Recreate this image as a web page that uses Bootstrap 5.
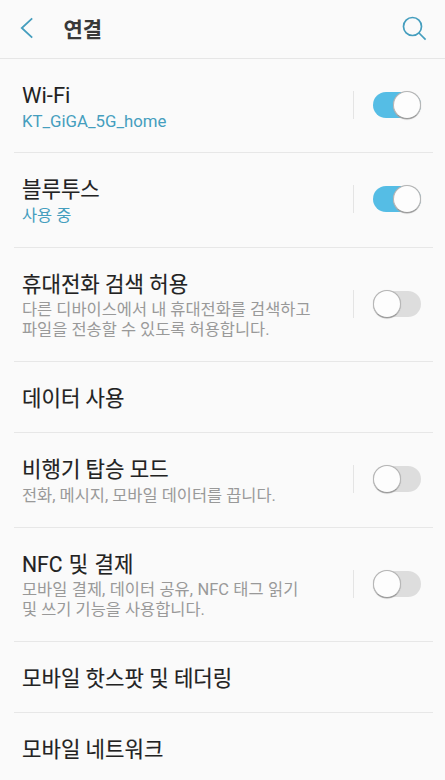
<!DOCTYPE html>
<html lang="ko">
<head>
<meta charset="utf-8">
<meta name="viewport" content="width=device-width, initial-scale=1">
<title>연결</title>
<link href="https://cdn.jsdelivr.net/npm/bootstrap@5.3.0/dist/css/bootstrap.min.css" rel="stylesheet">
<style>
body{background:#fafafa;color:#222;font-family:Roboto,"Noto Sans CJK KR",sans-serif;height:780px;overflow:hidden}
.topbar{height:59px;border-bottom:1px solid #e6e6e6;padding:0 18px 2px 20px}
.topbar svg{display:block;fill:none;stroke:#459ebe}
.topbar h1{font-size:21px;line-height:26px;font-weight:700;color:#383838;margin-left:29.5px;padding-top:3px}
.settings{margin:0 12px 0 14px}
.setting{border-bottom:1px solid #e7e7e7;padding:24px 12px 0 8px}
.h-net{height:94px}.h-two{height:95px}.h-three{height:114px}.h-one{height:71px}
.name{font-size:21.15px;line-height:26px;white-space:nowrap;-webkit-text-stroke:.15px currentColor}
.name.latin{font-size:22px;-webkit-text-stroke:0}
.name.mixed{word-spacing:1px}
.desc{font-size:16.45px;line-height:20px;padding-top:3px;color:#999;white-space:nowrap}
.h-three .desc{padding-top:2px}
.desc.on{color:#459ebe}
.desc.latin{font-size:16.8px;padding-top:2px}
.desc .wide{word-spacing:.35px}
.control{height:28px;border-left:1px solid #e4e4e4;padding-left:19px;margin-top:8px}
.h-three .control{margin-top:18px}
.switch-track{width:48px;height:26px;border-radius:13px;background:#ddd;border:0;padding:0;display:flex;align-items:center}
.switch-track span{flex:none;width:28px;height:28px;border-radius:50%;background:#fdfdfd;border:1px solid #b5b5b5;border-bottom-color:#999;box-shadow:0 .5px .8px #aaa}
.switch-track.checked{background:#55bde5;justify-content:flex-end}
</style>
</head>
<body>
<header class="topbar d-flex align-items-center">
<svg width="14" height="22" viewBox="0 0 14 22" stroke-width="1.8"><path d="M12.2 1.400 1.800 11l10.400 9.600"/></svg>
<h1 class="mb-0">연결</h1>
<svg class="ms-auto" width="25" height="25" viewBox="0 0 25 25" stroke-width="1.7"><circle cx="10.500" cy="10.500" r="9"/><path d="m17 17 6.600 6.600"/></svg>
</header>
<main class="settings">
<section class="setting h-net d-flex justify-content-between">
<div><div class="name latin">Wi-Fi</div><div class="desc on latin">KT_GiGA_5G_home</div></div>
<div class="control d-flex align-items-center"><button class="switch-track checked" role="switch" aria-checked="true" aria-label="Wi-Fi"><span></span></button></div>
</section>
<section class="setting h-two d-flex justify-content-between">
<div><div class="name">블루투스</div><div class="desc on">사용 중</div></div>
<div class="control d-flex align-items-center"><button class="switch-track checked" role="switch" aria-checked="true" aria-label="블루투스"><span></span></button></div>
</section>
<section class="setting h-three d-flex justify-content-between">
<div><div class="name">휴대전화 검색 허용</div><div class="desc">다른 디바이스에서 내 휴대전화를 검색하고<br>파일을 전송할 수 있도록 허용합니다.</div></div>
<div class="control d-flex align-items-center"><button class="switch-track" role="switch" aria-checked="false" aria-label="휴대전화 검색 허용"><span></span></button></div>
</section>
<section class="setting h-one"><div class="name">데이터 사용</div></section>
<section class="setting h-two d-flex justify-content-between">
<div><div class="name">비행기 탑승 모드</div><div class="desc">전화, 메시지, 모바일 데이터를 끕니다.</div></div>
<div class="control d-flex align-items-center"><button class="switch-track" role="switch" aria-checked="false" aria-label="비행기 탑승 모드"><span></span></button></div>
</section>
<section class="setting h-three d-flex justify-content-between">
<div><div class="name mixed">NFC 및 결제</div><div class="desc"><span class="wide">모바일 결제, 데이터 공유, NFC 태그 읽기</span><br>및 쓰기 기능을 사용합니다.</div></div>
<div class="control d-flex align-items-center"><button class="switch-track" role="switch" aria-checked="false" aria-label="NFC 및 결제"><span></span></button></div>
</section>
<section class="setting h-one"><div class="name">모바일 핫스팟 및 테더링</div></section>
<section class="setting h-one border-0"><div class="name">모바일 네트워크</div></section>
</main>
<script src="https://cdn.jsdelivr.net/npm/bootstrap@5.3.0/dist/js/bootstrap.bundle.min.js"></script>
</body>
</html>
